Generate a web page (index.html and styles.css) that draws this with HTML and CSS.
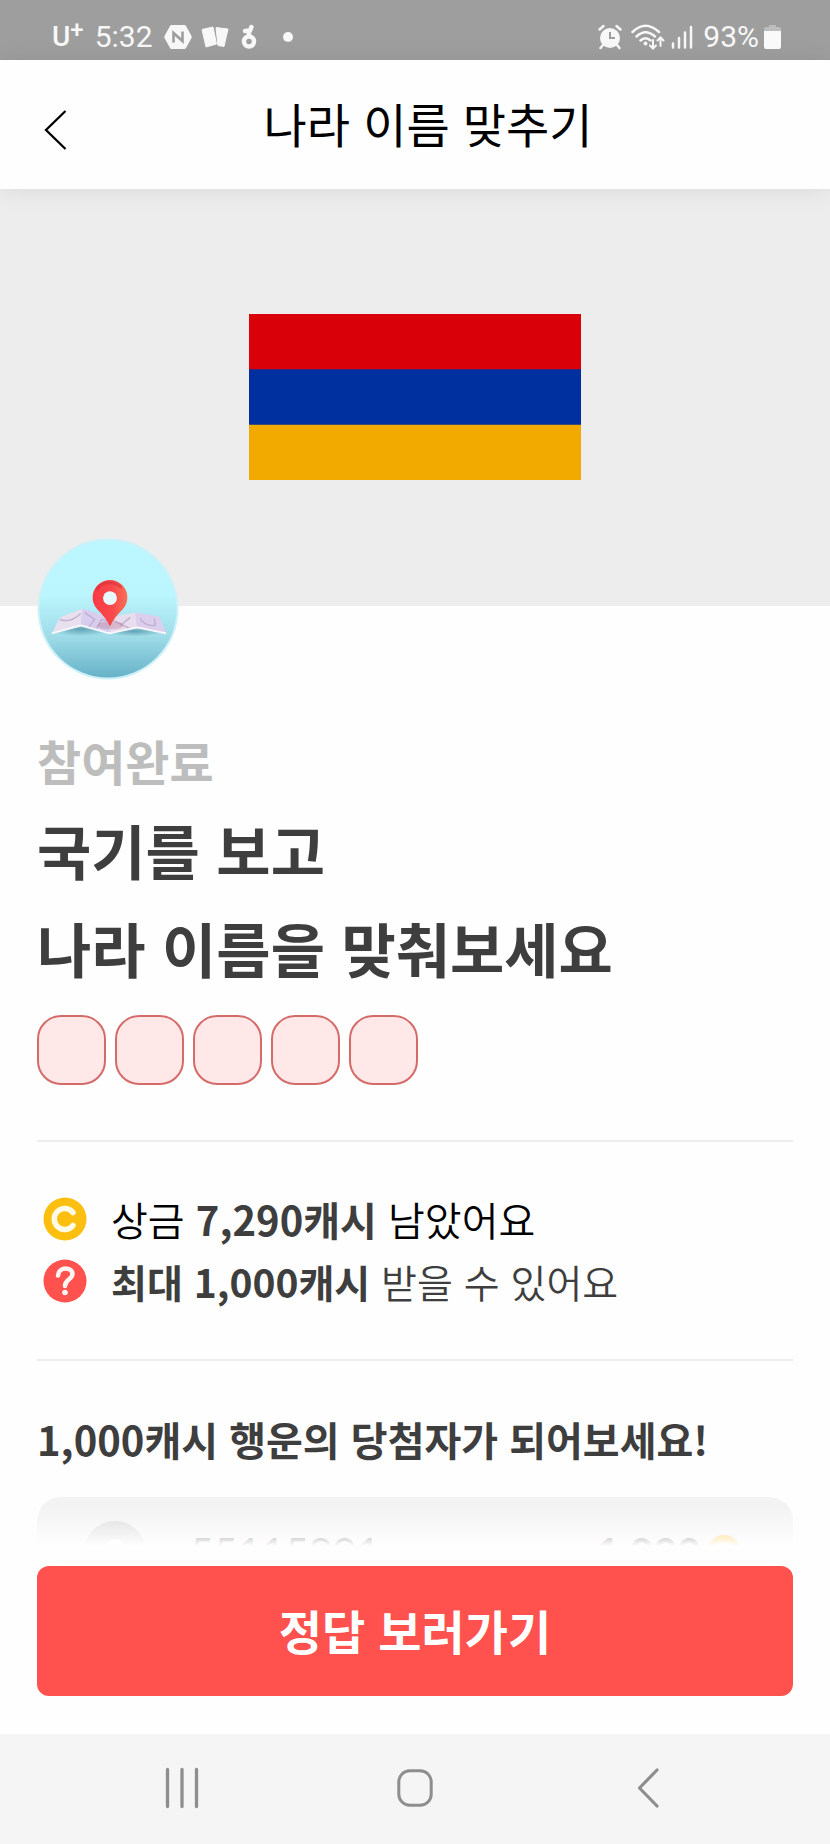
FILE: index.html
```html
<!DOCTYPE html>
<html lang="ko">
<head>
<meta charset="utf-8">
<meta name="viewport" content="width=device-width, initial-scale=1">
<title>나라 이름 맞추기</title>
<link rel="stylesheet" href="styles.css">
</head>
<body>
<div class="screen">
  <div class="status">
    <div class="status-side">
      <span class="carrier">U<span class="carrier-plus">+</span></span>
      <span class="status-text clock">5:32</span>
      <svg class="notice-hex" width="30" height="26" viewBox="0 0 30 26"><path d="M8.500 1h13q1 0 1.500 1l5.500 10q.5 1 0 2L23 24q-.5 1-1.500 1h-13q-1 0-1.500-1L1.500 14q-.5-1 0-2L7 2q.5-1 1.500-1z" fill="#f8f8f8"/><path d="M10.500 18.500V9l9 8V7.500" fill="none" stroke="#9e9e9e" stroke-width="2.600"/></svg>
      <svg class="notice-cards" width="28" height="22" viewBox="0 0 28 22"><path d="M1 3.500 12 1l3.500 17L5 21z" fill="#f8f8f8" stroke="#f8f8f8" stroke-linejoin="round"/><path d="M15 1.500l12 1.500-4 17.500-6-1z" fill="#f8f8f8" stroke="#f8f8f8" stroke-linejoin="round"/></svg>
      <svg class="notice-ring" width="16" height="26" viewBox="0 0 16 26"><circle cx="8" cy="17.500" r="5" fill="none" stroke="#f8f8f8" stroke-width="4.500"/><path d="M4 7l5-.5 1.500-3.500M8 11V7" fill="none" stroke="#f8f8f8" stroke-width="4.500" stroke-linecap="round"/></svg>
      <span class="notice-dot"></span>
    </div>
    <div class="status-side">
      <svg width="24" height="26" viewBox="0 0 24 26"><circle cx="12" cy="14" r="10" fill="#f8f8f8"/><path d="M1.500 5.500l4-3.500M22.500 5.500l-4-3.500M5 21l-2.500 3M19 21l2.500 3" stroke="#f8f8f8" stroke-width="2.500" stroke-linecap="round"/><path d="M12 8v6h5" fill="none" stroke="#9e9e9e" stroke-width="2"/></svg>
      <svg class="wifi" width="34" height="28" viewBox="0 0 34 28"><g fill="none" stroke="#f8f8f8" stroke-width="2.500" stroke-linecap="round"><path d="M1.500 9Q14.500-3.500 28 9M5.500 13.500q9-8.500 18.500 0M9.500 17.500q5-4.500 10 0"/><path d="M22 17v8M19 22.500l3 3 3-3M29.500 23v-8M26.500 17.500l3-3 3 3" stroke-width="2"/></g><circle cx="14.500" cy="20.500" r="2" fill="#f8f8f8"/></svg>
      <svg class="signal" width="22" height="24" viewBox="0 0 22 24"><path d="M2 18.500v4M8 13v9.500M14 7.500v15M20 2v20.500" stroke="#f8f8f8" stroke-width="2.500" stroke-linecap="round"/></svg>
      <span class="status-text battery-text">93%</span>
      <svg class="battery" width="17" height="24" viewBox="0 0 17 24"><path d="M5 0h7v2h3q2 0 2 2v3H0V4q0-2 2-2h3z" fill="#bdbdbd"/><path d="M0 6h17v16q0 2-2 2H2q-2 0-2-2z" fill="#fafafa"/></svg>
    </div>
  </div>

  <header class="header">
    <button class="back" type="button" aria-label="뒤로"><svg width="24" height="42" viewBox="0 0 24 42"><path d="M21.500 2 2 21l19.500 19" fill="none" stroke="#000" stroke-width="2.300"/></svg></button>
    <h1 class="title">나라 이름 맞추기</h1>
  </header>

  <main class="main">
    <div class="hero">
      <svg class="flag" viewBox="0 0 12 6" preserveAspectRatio="none" role="img" aria-label="국기"><path fill="#d90009" d="M0 0h12v6H0z"/><path fill="#002f9f" d="M0 2h12v4H0z"/><path fill="#f2a900" d="M0 4h12v2H0z"/></svg>
    </div>
    <div class="content">
      <svg class="badge" width="142" height="142" viewBox="0 0 143 143">
        <defs>
          <linearGradient id="sky" x1="0" y1="0" x2="0" y2="1"><stop offset="0" stop-color="#bcf7ff"/><stop offset=".4" stop-color="#bbf5fd"/><stop offset=".7" stop-color="#9fdce8"/><stop offset="1" stop-color="#67b2c8"/></linearGradient>
          <linearGradient id="pin" x1="0" y1="0" x2="1" y2="0"><stop offset="0" stop-color="#fb3a45"/><stop offset=".55" stop-color="#f8484a"/><stop offset="1" stop-color="#fb7058"/></linearGradient>
          <radialGradient id="shade"><stop offset="0" stop-color="#45889c" stop-opacity=".7"/><stop offset="1" stop-color="#45889c" stop-opacity="0"/></radialGradient>
        </defs>
        <circle cx="71.500" cy="71.500" r="71" fill="#cdf1f9"/>
        <circle cx="71.500" cy="71.500" r="69" fill="url(#sky)"/>
        <ellipse cx="44" cy="92" rx="30" ry="7" fill="url(#shade)"/><ellipse cx="98" cy="94" rx="30" ry="5" fill="url(#shade)"/>
        <path d="M15 96l8-16 23-9-2 18z" fill="#e8e0ee"/>
        <path d="M46 71l27 9v16L44 88z" fill="#d9cdee"/>
        <path d="M73 80l26-5 2 15-28 6z" fill="#e8dded"/>
        <path d="M99 75l24 4 7 17-29-5z" fill="#ddceed"/>
        <path d="M23 82q11 4 21-6M48 75l10 7-6 8M60 91l5-9 8 2M77 83l18 9M84 88l10-8M104 81q4 8 15 7l-1-7" fill="none" stroke="#c3b3d2" stroke-width="1.600"/>
        <path d="M15 96l29-8 29 8 28-6 29 6" fill="none" stroke="#fbf8fd" stroke-width="1.800" stroke-linejoin="round"/>
        <ellipse cx="74" cy="88" rx="13" ry="4" fill="#b36482" opacity=".3"/>
        <path d="M73.500 89Q70 81 60 71a17.500 17.500 0 1 1 27 0Q77 81 73.500 89z" fill="url(#pin)"/>
        <path d="M60 52q4-7 13-7 7 0 12 5" fill="none" stroke="#c92b37" stroke-width="3" opacity=".45"/>
        <circle cx="73.500" cy="60.500" r="7" fill="#e7faff"/>
      </svg>
      <p class="state">참여완료</p>
      <h2 class="question">국기를 보고<br>나라 이름을 맞춰보세요</h2>
      <div class="answer" aria-label="다섯 글자">
        <span class="slot"></span><span class="slot"></span><span class="slot"></span><span class="slot"></span><span class="slot"></span>
      </div>
      <ul class="rewards">
        <li class="reward reward-cash">
          <svg width="44" height="44" viewBox="0 0 44 44"><circle cx="22" cy="22" r="21.500" fill="#fdbf0f"/><path d="M30 15.500A10.500 10.500 0 1 0 30 28.500" fill="none" stroke="#fffbe6" stroke-width="5.500" stroke-linecap="round"/></svg>
          <span>상금 <b>7,290캐시</b> 남았어요</span>
        </li>
        <li class="reward">
          <svg width="44" height="44" viewBox="0 0 44 44"><circle cx="22" cy="22" r="21.500" fill="#ff514e"/><path d="M15 16.500c1-9.500 14.500-8.500 14.500-1.500 0 5.500-7.500 5-7.500 12" fill="none" stroke="#fff5f3" stroke-width="4.500" stroke-linecap="round"/><circle cx="22" cy="33.500" r="2.800" fill="#fff5f3"/></svg>
          <span><b>최대 1,000캐시</b> 받을 수 있어요</span>
        </li>
      </ul>
      <h3 class="lucky">1,000캐시 행운의 당첨자가 되어보세요!</h3>
      <div class="winner">
        <svg width="62" height="62" viewBox="0 0 62 62"><circle cx="31" cy="31" r="31" fill="#d9d9d9"/><circle cx="31" cy="29" r="11" fill="#fff"/><path d="M11 54q4-13 20-13t20 13" fill="#fff"/></svg>
        <span class="winner-id">55115991</span>
        <b class="winner-sum">1,000</b>
        <svg width="34" height="34" viewBox="0 0 44 44"><circle cx="22" cy="22" r="22" fill="#fdbf0f"/><path d="M30 15.500A10.500 10.500 0 1 0 30 28.500" fill="none" stroke="#fffbe6" stroke-width="5.500" stroke-linecap="round"/></svg>
      </div>
    </div>
  </main>

  <div class="action">
    <button class="submit" type="button">정답 보러가기</button>
  </div>

  <nav class="nav">
    <button class="nav-key" type="button" aria-label="최근 앱"><svg width="34" height="42" viewBox="0 0 34 42"><path d="M2.500 2.500v37M17 2.500v37M31.500 2.500v37" stroke="#8e8e8e" stroke-width="3.300" stroke-linecap="round"/></svg></button>
    <button class="nav-key" type="button" aria-label="홈"><svg width="36" height="38" viewBox="0 0 36 38"><rect x="1.800" y="1.800" width="32.400" height="34.400" rx="11" fill="none" stroke="#8e8e8e" stroke-width="3"/></svg></button>
    <button class="nav-key" type="button" aria-label="뒤로 가기"><svg width="22" height="42" viewBox="0 0 22 42"><path d="M20 3 2.500 21 20 39" fill="none" stroke="#8e8e8e" stroke-width="3.200" stroke-linecap="round" stroke-linejoin="round"/></svg></button>
  </nav>
</div>
</body>
</html>
```
FILE: styles.css
```css
* { box-sizing: border-box; }
body, h1, h2, h3, p, ul { margin: 0; padding: 0; }
body { background: #fefefe; color: #3e3e3e; font-family: "Noto Sans CJK KR", sans-serif; }
button { border: 0; padding: 0; background: none; font: inherit; cursor: pointer; }
svg { display: block; flex: none; }

.screen { display: flex; flex-direction: column; height: 100vh; }

.status { display: flex; justify-content: space-between; height: 60px; flex: none; padding: 14px 49px 0 52px; background: #9e9e9e; color: #f8f8f8; font-family: Roboto, sans-serif; }
.status-side { display: flex; align-items: center; }
.status-text { font-size: 30px; line-height: 36px; }
.carrier { display: flex; align-items: flex-start; font-size: 28px; font-weight: 500; line-height: 38px; }
.carrier-plus { font-size: 24px; line-height: 24px; }
.clock { margin-left: 11px; }
.notice-hex { margin-left: 10px; }
.notice-cards { margin-left: 8px; }
.notice-ring { margin-left: 12px; }
.notice-dot { width: 10px; height: 10px; margin-left: 26px; border-radius: 50%; background: #f8f8f8; }
.wifi { margin-left: 9px; }
.signal { margin-left: 6px; }
.battery-text { margin-left: 10px; }
.battery { margin-left: 5px; }

.header { position: relative; z-index: 1; display: grid; grid-template-columns: 68px 1fr 68px; height: 129px; flex: none; padding-left: 26px; background: #fefefe; box-shadow: 0 2px 24px rgba(0, 0, 0, 0.08); }
.back { display: flex; align-items: center; padding: 10px 0 0 18px; }
.title { align-self: center; padding-bottom: 4px; color: #000; font-size: 47px; font-weight: 400; line-height: 60px; text-align: center; }

.main { flex: 1; min-height: 0; overflow: hidden; }
.hero { display: flex; align-items: center; justify-content: center; height: 417px; padding-bottom: 2px; background: #ededed; }
.flag { width: 40%; aspect-ratio: 2 / 1; }
.content { padding: 0 37px; }
.badge { position: relative; margin-top: -68px; }
.state { margin-top: 52px; color: #bdbdbd; font-size: 48px; font-weight: 700; line-height: 56px; }
.question { margin-top: 13px; font-size: 59px; font-weight: 700; line-height: 98px; }
.answer { display: flex; gap: 9px; margin-top: 18px; }
.slot { width: 69px; height: 70px; border: 2px solid #d56b69; border-radius: 24px; background: #ffe8e7; }

.rewards { margin-top: 55px; padding: 46px 0 47px; border: solid #ededed; border-width: 2px 0; list-style: none; }
.reward { display: flex; align-items: center; gap: 24px; height: 62px; padding-left: 6px; font-size: 39px; font-weight: 350; line-height: 62px; }
.reward b { color: #3e3e3e; font-weight: 700; }
.reward-cash { color: #000; font-size: 40px; }
.lucky { margin-top: 47px; font-size: 40px; font-weight: 700; line-height: 62px; }
.winner { display: flex; align-items: center; margin-top: 27px; padding: 22px 52px 22px 47px; border-radius: 24px; background: #f3f3f3; font-family: Lato, "Noto Sans CJK KR", sans-serif; font-size: 41px; line-height: 66px; }
.winner-id { flex: 1; margin-left: 44px; }
.winner-sum { margin-right: 6px; font-weight: 700; }

.action { position: relative; flex: none; padding: 20px 37px 38px; background: #fefefe; }
.action::before { content: ""; position: absolute; right: 0; bottom: 100%; left: 0; height: 40px; background: linear-gradient(rgba(254, 254, 254, 0), #fefefe); }
.submit { width: 100%; height: 130px; padding-bottom: 3px; border-radius: 12px; background: #ff514e; color: #fff; font-size: 47px; font-weight: 700; }

.nav { display: flex; align-items: center; justify-content: space-around; height: 110px; flex: none; padding: 0 66px 2px; background: #f5f5f5; }
.nav-key { display: flex; align-items: center; justify-content: center; flex: 1; height: 100%; }
```
